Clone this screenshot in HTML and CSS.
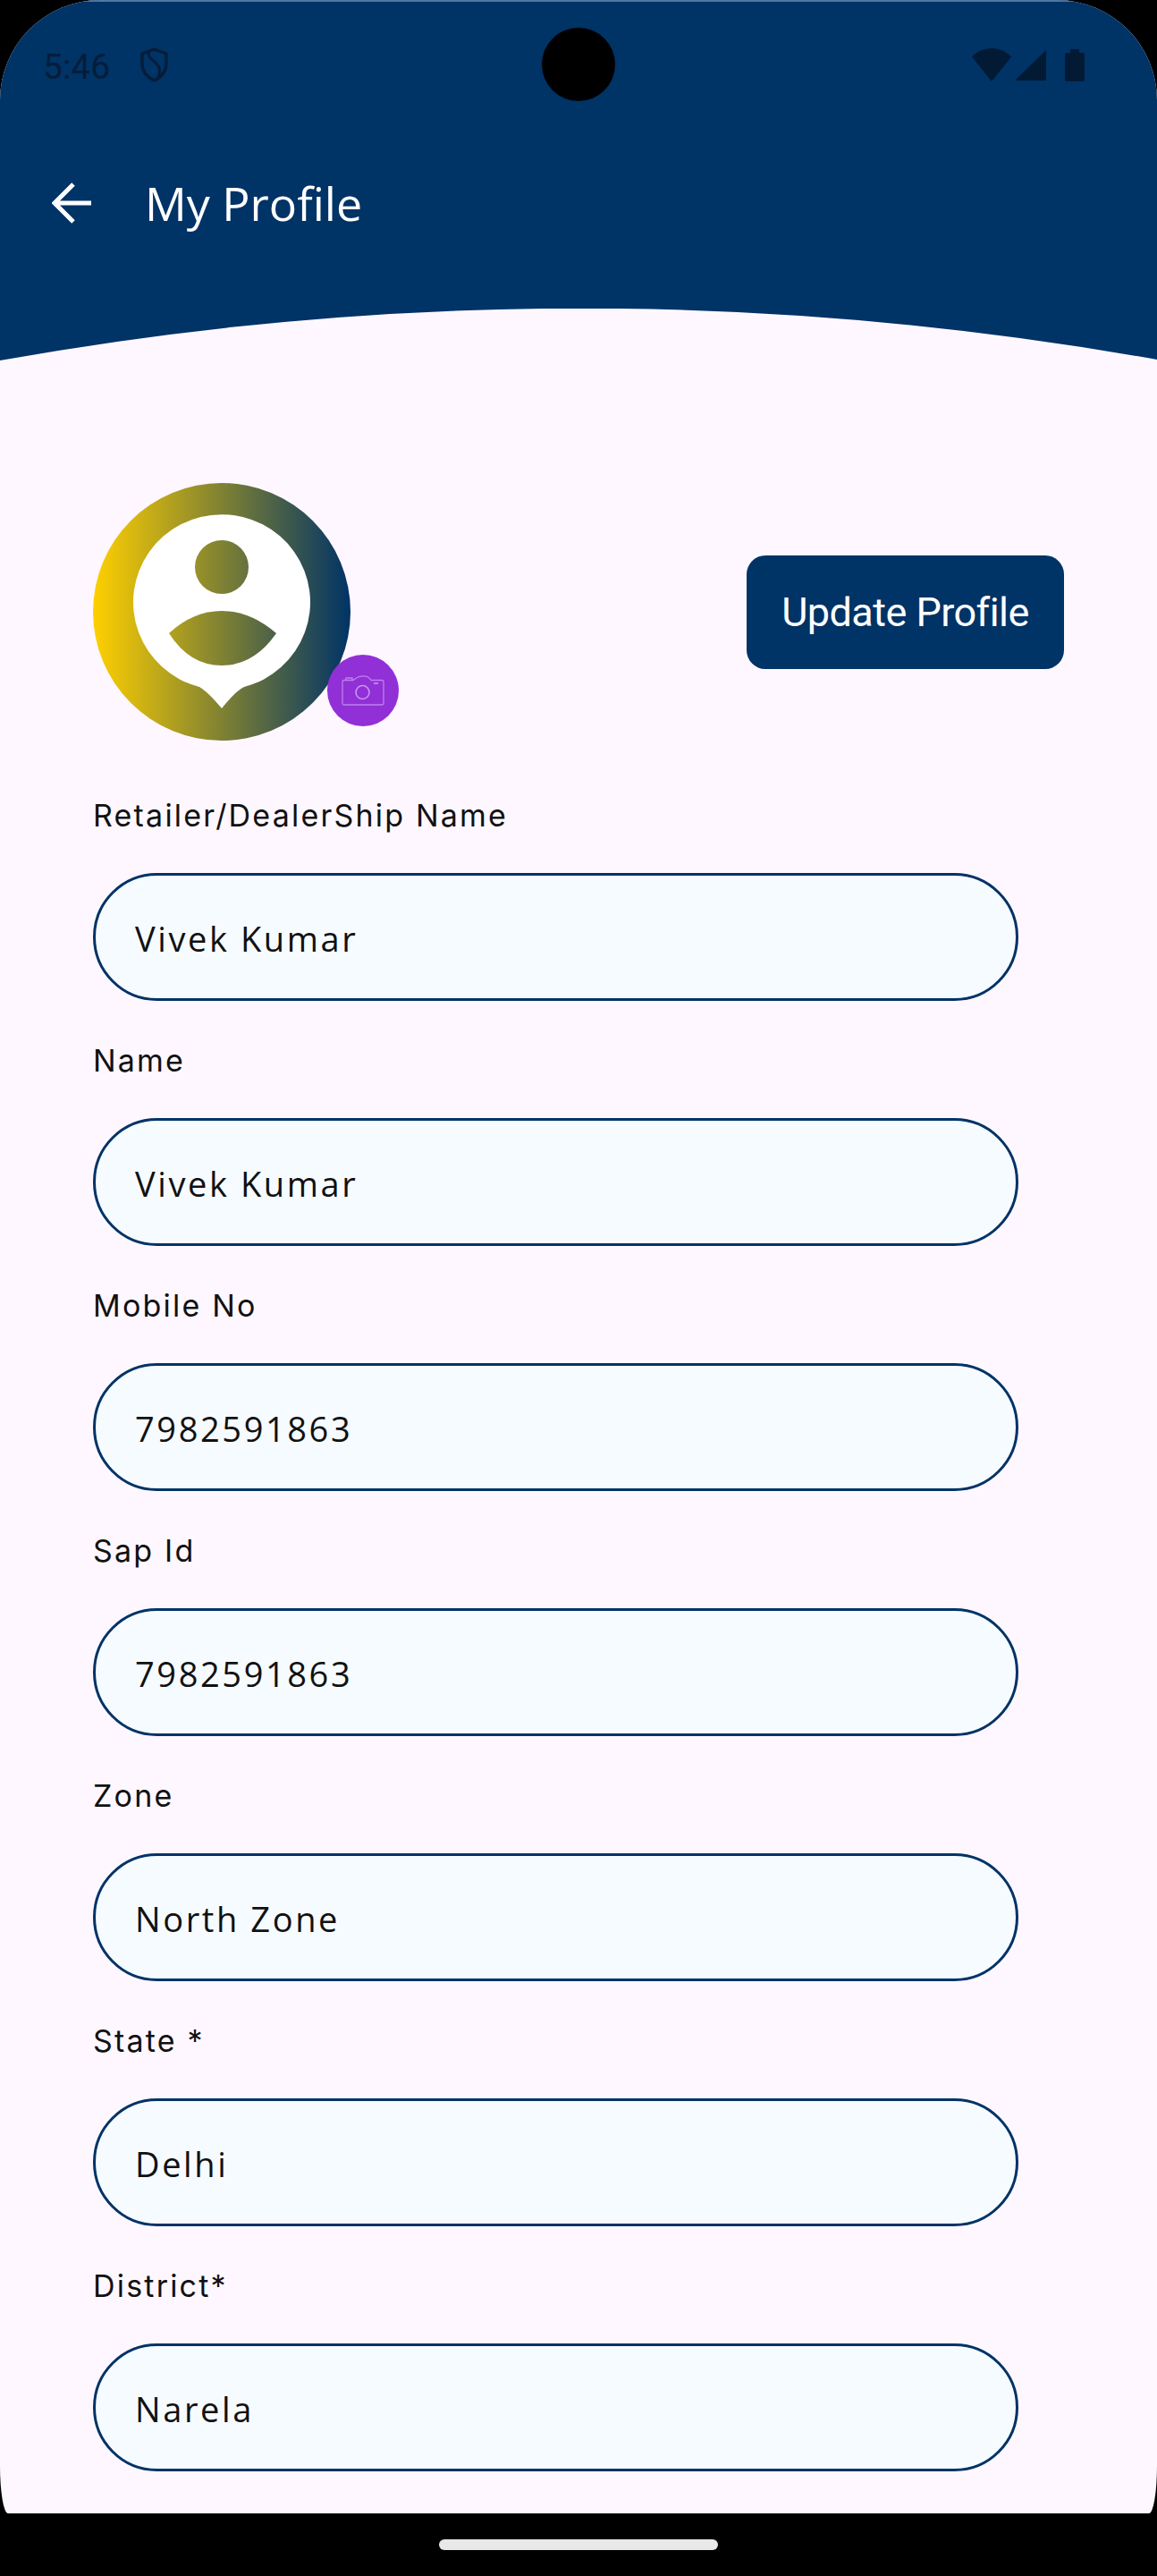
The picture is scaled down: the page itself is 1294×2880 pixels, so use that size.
FILE: index.html
```html
<!DOCTYPE html>
<html lang="en">
<head>
  <meta charset="UTF-8" />
  <meta name="viewport" content="width=device-width, initial-scale=1.0"/>
  <title>My Profile</title>
  <link rel="stylesheet" href="styles.css">
</head>
<body>
  <div class="screen">
    <div class="punch-hole"></div>

    <header class="top">
      <div class="status-bar">
        <div class="status-left">
          <span class="time">5:46</span>
          <svg class="shield" viewBox="0 0 31 39" width="31" height="39">
            <path d="M15.5 2 L29 7 V18 C29 27 23 33.500 15.500 37 C8 33.500 2 27 2 18 V7 Z" fill="none" stroke="#061d3a" stroke-width="3.400" stroke-linejoin="round"/>
            <path d="M9 4 C8 12 14 14 18 18 C22 22 23 29 19 35" fill="none" stroke="#061d3a" stroke-width="3"/>
          </svg>
        </div>
        <svg class="status-icons" viewBox="0 0 126 38" width="126" height="38">
          <path d="M22 37 L0 9.500 C6 3.500 13.500 0 22 0 C30.500 0 38 3.500 44 9.500 Z" fill="#031a35"/>
          <path d="M48 36 L83 2 V36 Z" fill="#031a35"/>
          <path d="M110 1 H120 V5 H124 Q126 5 126 7 V35 Q126 37 124 37 H106 Q104 37 104 35 V7 Q104 5 106 5 H110 Z" fill="#031a35"/>
        </svg>
      </div>

      <div class="app-bar">
        <svg class="back" viewBox="0 0 46 46" width="46" height="46">
          <path d="M44 23 H4 M24 2 L3 23 L24 44" fill="none" stroke="#fff" stroke-width="5"/>
        </svg>
        <h1>My Profile</h1>
      </div>

      <svg class="curve" viewBox="0 0 1294 60" width="1294" height="60" preserveAspectRatio="none">
        <path d="M0 60 L0 58 Q647 -58 1294 57 L1294 60 Z" fill="#fef7ff"/>
      </svg>
    </header>

    <main>
      <div class="profile-row">
        <div class="avatar">
          <svg viewBox="0 0 288 288" width="288" height="288">
            <defs>
              <linearGradient id="ring" gradientUnits="userSpaceOnUse" x1="0" y1="0" x2="288" y2="0">
                <stop offset="0" stop-color="#ffd000"/>
                <stop offset="1" stop-color="#003366"/>
              </linearGradient>
            </defs>
            <circle cx="144" cy="144" r="144" fill="url(#ring)"/>
            <path d="M119 228 A99 98 0 1 1 169 228 Q160 232 144 252 Q128 233 119 228 Z" fill="#fff"/>
            <circle cx="144" cy="94" r="30" fill="url(#ring)"/>
            <path d="M85 168 Q112 143 144 143 Q176 143 205 168 Q180 204 144 204 Q108 204 85 168 Z" fill="url(#ring)"/>
          </svg>
          <div class="camera-badge">
            <svg viewBox="0 0 48 34" width="48" height="34">
              <path d="M3 5.500 H13 L15 4 Q19 0.800 25 0.800 Q30 0.800 33 5.500 H45 Q47 5.500 47 7.500 V31 Q47 33 45 33 H3 Q1 33 1 31 V7.500 Q1 5.500 3 5.500 Z" fill="none" stroke="#bd7ff0" stroke-width="1.300"/>
              <path d="M5 5 V3 H12 V5" fill="none" stroke="#bd7ff0" stroke-width="1.300"/>
              <circle cx="23.500" cy="19" r="7.500" fill="none" stroke="#c995f3" stroke-width="1.600"/>
              <path d="M36 9 H41" stroke="#c995f3" stroke-width="1.600"/>
            </svg>
          </div>
        </div>
        <button class="update-btn">Update Profile</button>
      </div>

      <div class="fields">
        <div class="field">
          <label>Retailer/DealerShip Name</label>
          <div class="field-box">Vivek Kumar</div>
        </div>
        <div class="field">
          <label>Name</label>
          <div class="field-box">Vivek Kumar</div>
        </div>
        <div class="field">
          <label>Mobile No</label>
          <div class="field-box">7982591863</div>
        </div>
        <div class="field">
          <label>Sap Id</label>
          <div class="field-box">7982591863</div>
        </div>
        <div class="field">
          <label>Zone</label>
          <div class="field-box">North Zone</div>
        </div>
        <div class="field">
          <label>State *</label>
          <div class="field-box">Delhi</div>
        </div>
        <div class="field">
          <label>District*</label>
          <div class="field-box">Narela</div>
        </div>
      </div>
    </main>
  </div>

  <div class="nav-bar"><div class="home-pill"></div></div>
</body>
</html>
```

FILE: styles.css
```css
/* Reset & base */
* { box-sizing: border-box; margin: 0; padding: 0; }
html, body { height: 100%; }
body { width: 1294px; height: 2880px; background: #000; overflow: hidden; font-family: 'Open Sans', sans-serif; color: #111; }

/* Phone screen with rounded corners */
.screen {
  position: relative;
  height: 2810px;
  background: #fef7ff;
  border-radius: 112px 112px 9px 9px / 112px 112px 53px 53px;
  overflow: hidden;
}
.punch-hole {
  position: absolute; top: 31px; left: 606px;
  width: 82px; height: 82px;
  background: #000; border-radius: 50%;
}

/* Navy header */
.top {
  display: flex; flex-direction: column;
  height: 405px;
  background: #003366;
  border-top: 2px solid #4f79a3;
}
.status-bar {
  display: flex; align-items: center; justify-content: space-between;
  height: 40px; margin-top: 51px;
  padding: 0 81px 0 48px;
}
.status-left { display: flex; align-items: flex-start; gap: 34px; }
.time { margin-top: 3px; font-family: 'Roboto', sans-serif; font-size: 39px; line-height: 40px; color: #061d3a; }
.shield { margin-top: 1px; }
.shield, .status-icons, .back { display: block; }

.app-bar { display: flex; align-items: center; gap: 58px; height: 72px; margin-top: 98px; padding-left: 58px; }
.app-bar h1 { font-weight: 400; font-size: 52px; line-height: 72px; color: #fff; }

.curve { display: block; margin-top: auto; }

/* Form */
main { padding: 135px 104px 0; }
.profile-row { display: flex; align-items: center; justify-content: space-between; height: 288px; }
.avatar { position: relative; width: 288px; height: 288px; }
.avatar > svg { display: block; }
.camera-badge {
  position: absolute; left: 262px; top: 192px;
  display: flex; align-items: center; justify-content: center;
  width: 80px; height: 80px;
  background: #9130d6; border-radius: 50%;
}
.update-btn {
  width: 355px; height: 127px;
  border: none; border-radius: 21px;
  background: #003366; color: #fff;
  font-family: 'Roboto', sans-serif; font-size: 45px; letter-spacing: -0.55px;
}

.fields { display: flex; flex-direction: column; gap: 45px; margin-top: 62px; }
.field label { display: block; height: 48px; margin-bottom: 38px; font-family: 'Inter', sans-serif; font-size: 34px; line-height: 44px; letter-spacing: 2.2px; color: #111; }
.field-box {
  display: flex; align-items: center;
  width: 1035px; height: 143px;
  padding: 2px 44px 0;
  background: #f6fbff;
  border: 3px solid #003366;
  border-radius: 72px;
  font-size: 38px; letter-spacing: 2.6px; color: #111;
}

/* Bottom nav */
.nav-bar { display: flex; justify-content: center; padding-top: 29px; height: 70px; }
.home-pill { width: 312px; height: 12px; background: #e8e8e8; border-radius: 6px; }
```
